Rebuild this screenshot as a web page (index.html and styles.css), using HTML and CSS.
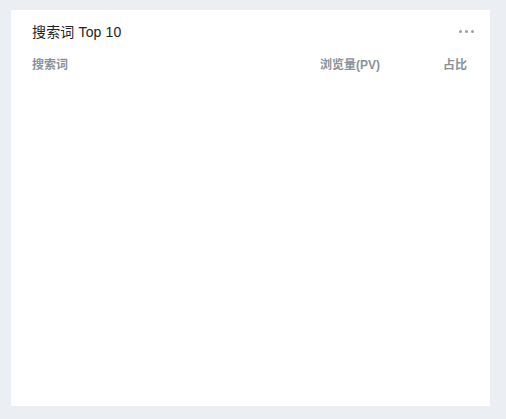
FILE: index.html
```html
<!DOCTYPE html>
<html lang="zh-CN">
<head>
<meta charset="utf-8">
<link rel="stylesheet" href="styles.css">
</head>
<body>
<div class="page">
  <section class="card">
    <header class="card-head">
      <h2 class="card-title">搜索词 Top 10</h2>
      <span class="more" aria-label="更多"><i></i><i></i><i></i></span>
    </header>
    <table class="rank">
      <thead>
        <tr>
          <th class="col-word">搜索词</th>
          <th class="col-pv">浏览量(PV)</th>
          <th class="col-ratio">占比</th>
        </tr>
      </thead>
      <tbody></tbody>
    </table>
  </section>
</div>
</body>
</html>
```
FILE: styles.css
```css
html, body {
  margin: 0;
  padding: 0;
  background: #ebeef3;
}
.page {
  width: 506px;
  height: 419px;
  box-sizing: border-box;
  padding: 10px 16px 13px 11px;
}
.card {
  background: #fff;
  height: 100%;
  box-sizing: border-box;
  padding: 10px 23px 0 21px;
  font-family: "Liberation Sans", "Noto Sans CJK SC", sans-serif;
}
.card-head {
  display: flex;
  align-items: center;
  justify-content: space-between;
  height: 24px;
}
.card-title {
  margin: 0;
  font-size: 14px;
  font-weight: normal;
  color: #222;
  line-height: 24px;
  letter-spacing: 0.15px;
}
.more {
  display: flex;
  gap: 3px;
  margin-right: -7px;
  margin-top: -1px;
}
.more i {
  width: 3px;
  height: 3px;
  border-radius: 50%;
  background: #9a9ea6;
}
.rank {
  width: 100%;
  border-collapse: collapse;
  margin-top: 12px;
}
.rank th {
  font-size: 12px;
  font-weight: bold;
  color: #8b919b;
  line-height: 18px;
  padding: 0;
}
.col-word { text-align: left; }
.col-pv { text-align: right; }
.col-ratio { text-align: right; width: 87px; }
```
